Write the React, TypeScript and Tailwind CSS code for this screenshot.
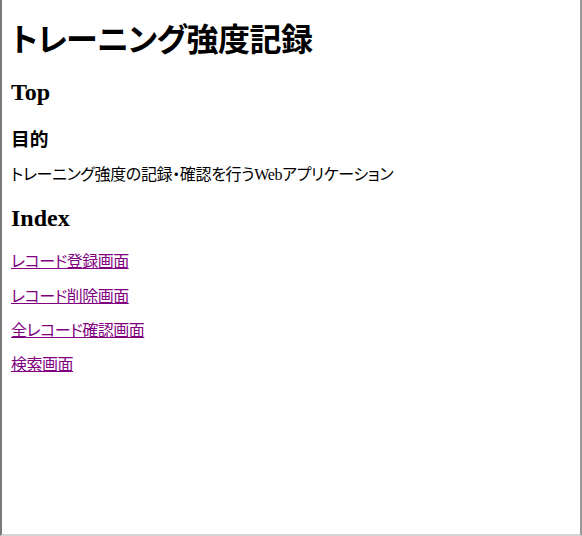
import React from "react";

function NavLink({ label, className }: { label: string; className: string }) {
  return (
    <a
      href="#"
      className={
        "text-[16px] leading-[20px] text-[#800080] underline tracking-[-0.5px] [font-feature-settings:'palt'] font-['Noto_Sans_CJK_JP',sans-serif] " +
        className
      }
    >
      {label}
    </a>
  );
}

export default function App() {
  return (
    <div className="w-[582px] h-[536px] bg-white box-border border-l-2 border-l-[#7a7a7a] border-r-2 border-r-[#9a9a9a] border-b-2 border-b-[#d4d4d4] overflow-hidden">
      <div className="pl-[9px] flex flex-col items-start text-black">
        <h1 className="mt-[19px] text-[32px] leading-[36px] font-bold tracking-[-0.5px] [font-feature-settings:'palt'] font-['Noto_Sans_CJK_JP',sans-serif]">
          トレーニング強度記録
        </h1>
        <h2 className="mt-[23px] text-[24px] leading-[28px] font-bold font-['Liberation_Serif','Noto_Sans_CJK_JP',serif]">
          Top
        </h2>
        <h3 className="mt-[20px] text-[18.72px] leading-[24px] font-bold font-['Noto_Sans_CJK_JP',sans-serif]">
          目的
        </h3>
        <p className="mt-[15px] text-[16px] leading-[20px] tracking-[-0.35px] [font-feature-settings:'palt'] font-['Liberation_Serif','Noto_Sans_CJK_JP',serif]">
          トレーニング強度の記録・確認を行うWebアプリケーション
        </p>
        <h2 className="mt-[19px] text-[24px] leading-[28px] font-bold font-['Liberation_Serif','Noto_Sans_CJK_JP',serif]">
          Index
        </h2>
        <NavLink label="レコード登録画面" className="mt-[18px]" />
        <NavLink label="レコード削除画面" className="mt-[15px]" />
        <NavLink label="全レコード確認画面" className="mt-[14px]" />
        <NavLink label="検索画面" className="mt-[14px]" />
      </div>
    </div>
  );
}
